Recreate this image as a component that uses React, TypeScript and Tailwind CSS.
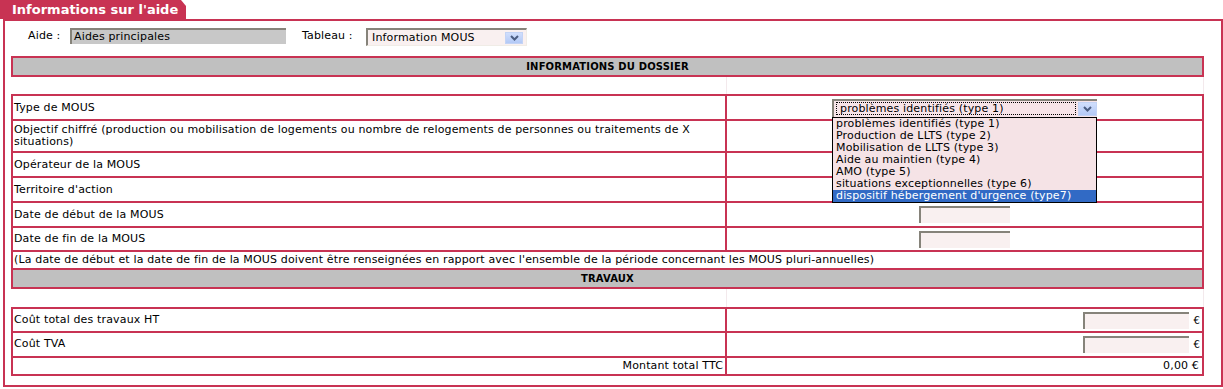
import { useState } from "react";

type Row = {
  label: string;
  height: string;
  right?: "select" | "date";
};

const dossierRows: Row[] = [
  { label: "Type de MOUS", height: "h-[25px]", right: "select" },
  {
    label:
      "Objectif chiffré (production ou mobilisation de logements ou nombre de relogements de personnes ou traitements de X\nsituations)",
    height: "h-[32px]",
  },
  { label: "Opérateur de la MOUS", height: "h-[25px]" },
  { label: "Territoire d'action", height: "h-[25px]" },
  { label: "Date de début de la MOUS", height: "h-[25px]", right: "date" },
  { label: "Date de fin de la MOUS", height: "h-[24px]", right: "date" },
];

const mousTypes = [
  "problèmes identifiés (type 1)",
  "Production de LLTS (type 2)",
  "Mobilisation de LLTS (type 3)",
  "Aide au maintien (type 4)",
  "AMO (type 5)",
  "situations exceptionnelles (type 6)",
  "dispositif hébergement d'urgence (type7)",
];

function ArrowButton({ className }: { className: string }) {
  return (
    <span
      className={`flex items-center justify-center border border-[#c3d3f5] bg-gradient-to-b from-[#d0defc] to-[#b3c9f6] ${className}`}
    >
      <svg width="9" height="6" viewBox="0 0 9 6">
        <polyline
          points="1,1 4.5,4.5 8,1"
          fill="none"
          stroke="#4b5d82"
          strokeWidth="2"
        />
      </svg>
    </span>
  );
}

function TypeSelect() {
  const [selected] = useState(0);

  return (
    <div className="relative">
      <div className="flex h-[18px] w-[265px] items-center border-l-2 border-t-2 border-[#86837a] bg-[#f7e4e8]">
        <span className="ml-[2px] flex h-[13px] w-[240px] items-center border border-dotted border-black pl-[3px] leading-[12px]">
          {mousTypes[selected]}
        </span>
        <ArrowButton className="ml-[2px] h-[14px] w-[19px]" />
      </div>
      <ul className="absolute left-0 top-[18px] z-10 w-[265px] border border-black bg-[#f5e3e6]">
        {mousTypes.map((type, i) => (
          <li
            key={type}
            className={`h-[12px] whitespace-nowrap pl-[3px] leading-[12px] ${
              i === mousTypes.length - 1 ? "bg-[#316ac5] text-white" : ""
            }`}
          >
            {type}
          </li>
        ))}
      </ul>
    </div>
  );
}

function PinkInput({ className }: { className: string }) {
  return (
    <span
      className={`block h-[17px] border-l-2 border-t-2 border-[#86837a] bg-[#f9f0f0] ${className}`}
    />
  );
}

function GapRow({ height }: { height: string }) {
  return (
    <div className={`grid w-[1193px] grid-cols-[716px_1fr] ${height}`}>
      <div className="border-r border-[#f3e9ec]" />
      <div className="border-r border-[#f3e9ec]" />
    </div>
  );
}

export default function App() {
  return (
    <div className="h-[389px] w-[1223px] overflow-hidden bg-white font-['DejaVu_Sans',sans-serif] text-[11px] tracking-[0.15px] text-black">
      <div className="h-[19px] w-[186px] bg-[#c83353] pl-3 text-[13px] font-bold leading-[19px] tracking-normal text-white [clip-path:polygon(0_0,181px_0,186px_6px,186px_100%,0_100%)]">
        Informations sur l'aide
      </div>

      <div className="ml-[3px] h-[368px] w-[1220px] border-2 border-[#c83353] pl-[6px]">
        {/* aide / tableau */}
        <div className="mt-[7px] flex h-[18px] items-start">
          <span className="ml-[17px] w-[42px] pt-[2px] leading-[12px]">Aide :</span>
          <span className="h-[16px] w-[216px] border-l-2 border-t-2 border-[#86837a] bg-[#c8c8c8] pl-[2px] leading-[13px]">
            Aides principales
          </span>
          <span className="ml-[16px] w-[64px] pt-[2px] leading-[12px]">Tableau :</span>
          <span className="flex h-[18px] w-[161px] items-center border-b border-l-2 border-r border-t-2 border-b-[#f0ece6] border-l-[#86837a] border-r-[#f0ece6] border-t-[#86837a] bg-[#f9f0f0] pl-[4px]">
            <span className="w-[133px] leading-[12px]">Information MOUS</span>
            <ArrowButton className="h-[12px] w-[18px]" />
          </span>
        </div>

        {/* informations du dossier */}
        <div className="mt-[10px] flex h-[21px] w-[1193px] items-center justify-center border-2 border-[#c83353] bg-[#c0c0c0] text-[10px] font-bold">
          INFORMATIONS DU DOSSIER
        </div>

        <GapRow height="h-[17px]" />

        <div className="w-[1193px] border-x-2 border-b-2 border-[#c83353]">
          {dossierRows.map((row) => (
            <div
              key={row.label}
              className={`grid grid-cols-[714px_1fr] border-t-2 border-[#c83353] ${row.height}`}
            >
              <div className="flex items-center whitespace-pre border-r-2 border-[#c83353] pl-px leading-[12px]">
                {row.label}
              </div>
              <div className="flex items-center justify-center">
                {row.right === "select" && <TypeSelect />}
                {row.right === "date" && <PinkInput className="w-[91px]" />}
              </div>
            </div>
          ))}
          <div className="flex h-[18px] items-center border-t-2 border-[#c83353] pl-px">
            (La date de début et la date de fin de la MOUS doivent être renseignées en rapport avec l'ensemble de la période concernant les MOUS pluri-annuelles)
          </div>
          <div className="flex h-[19px] items-center justify-center border-t-2 border-[#c83353] bg-[#c0c0c0] text-[10px] font-bold">
            TRAVAUX
          </div>
        </div>

        <GapRow height="h-[18px]" />

        {/* travaux */}
        <div className="w-[1193px] border-x-2 border-b-2 border-[#c83353]">
          <div className="grid h-[24px] grid-cols-[714px_1fr] border-t-2 border-[#c83353]">
            <div className="flex items-center border-r-2 border-[#c83353] pl-px">
              Coût total des travaux HT
            </div>
            <div className="flex items-center justify-end pr-[2px]">
              <PinkInput className="w-[106px]" />
              <span className="ml-[4px] text-[10px]">€</span>
            </div>
          </div>
          <div className="grid h-[25px] grid-cols-[714px_1fr] border-t-2 border-[#c83353]">
            <div className="flex items-center border-r-2 border-[#c83353] pl-px">Coût TVA</div>
            <div className="flex items-center justify-end pr-[2px]">
              <PinkInput className="w-[106px]" />
              <span className="ml-[4px] text-[10px]">€</span>
            </div>
          </div>
          <div className="grid h-[18px] grid-cols-[714px_1fr] border-t-2 border-[#c83353]">
            <div className="flex items-center justify-end border-r-2 border-[#c83353] pr-[2px]">
              Montant total TTC
            </div>
            <div className="flex items-center justify-end pr-[3px]">0,00 €</div>
          </div>
        </div>
      </div>
    </div>
  );
}
